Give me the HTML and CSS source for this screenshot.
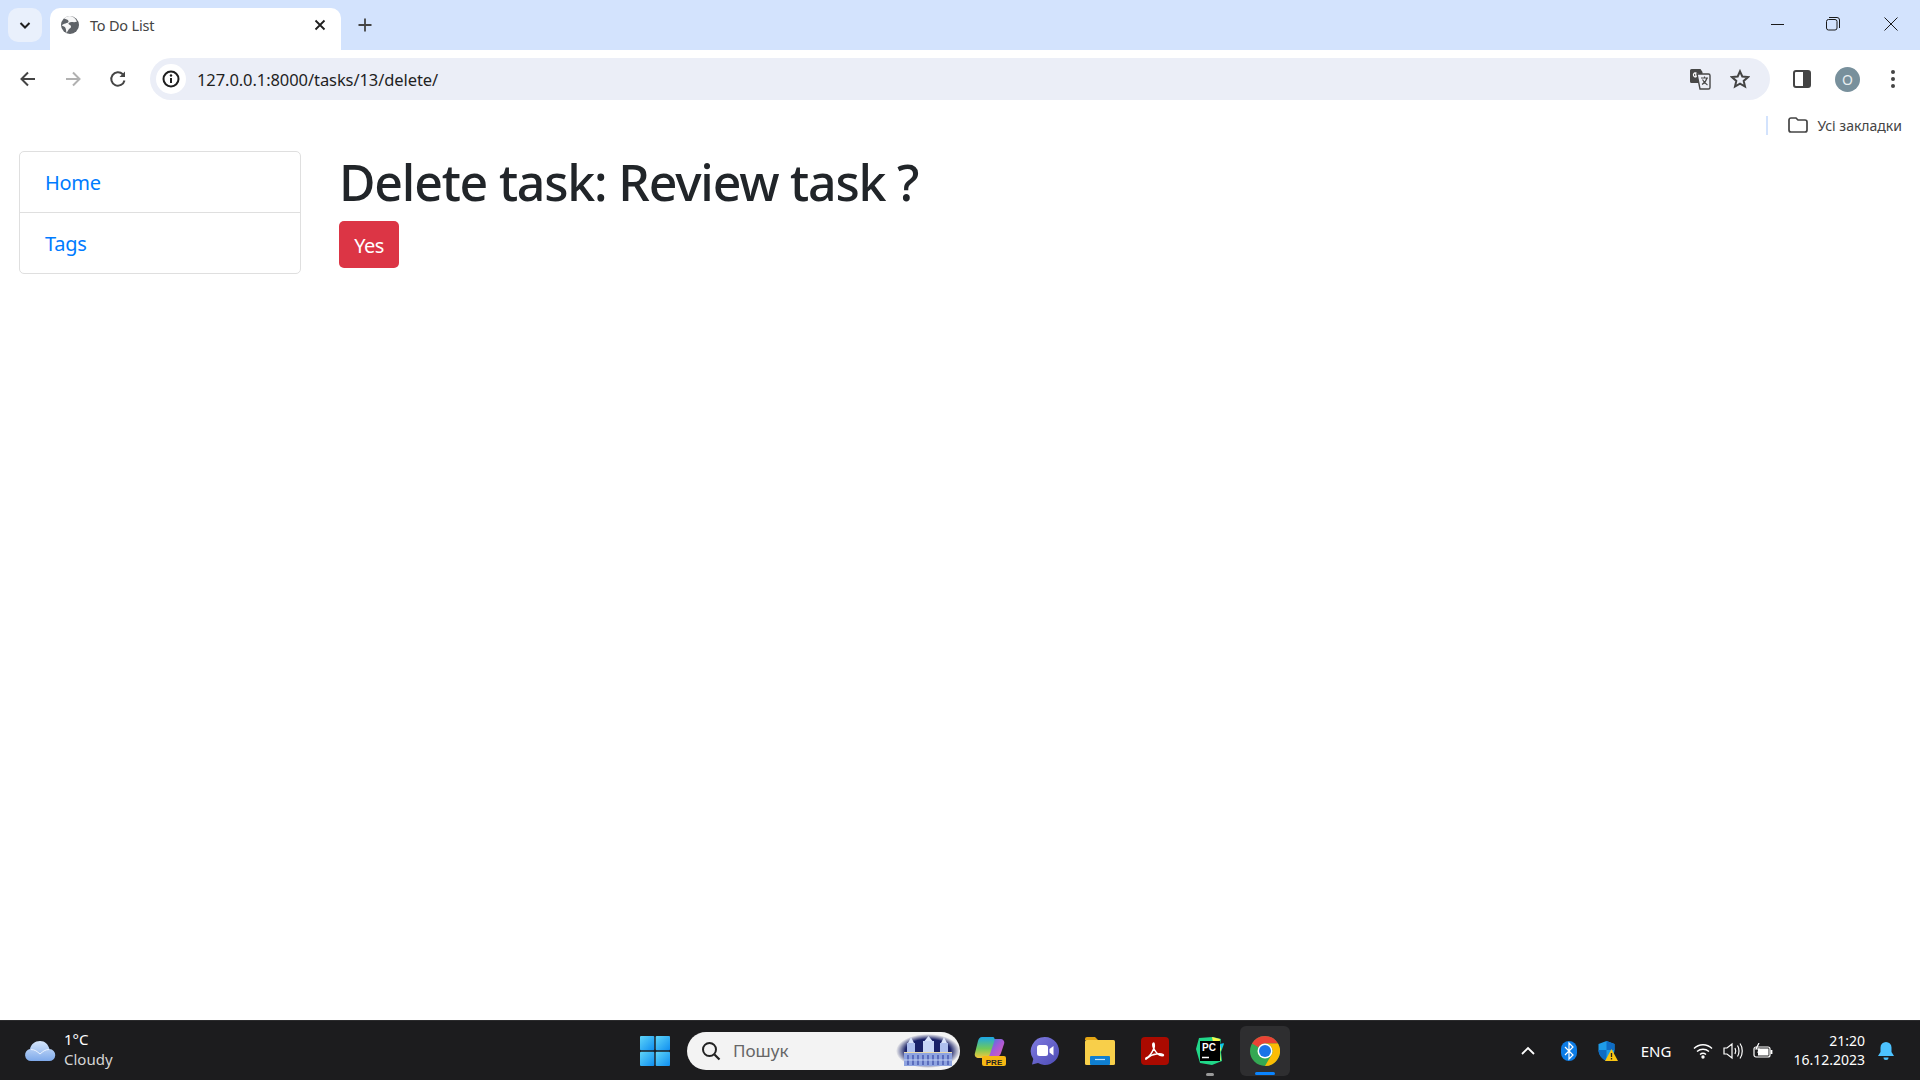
FILE: index.html

```html
<!DOCTYPE html>
<html lang="en">
<head>
    <meta charset="UTF-8">
    <title>To Do List</title>
    <link rel="stylesheet" href="styles.css">
</head>
<body>

<div class="tabstrip">
    <div class="tab-search">
        <svg width="14" height="14" viewBox="0 0 14 14"><path d="M2.5 5l4.5 4.5L11.500 5" fill="none" stroke="#1f1f1f" stroke-width="2"/></svg>
    </div>
    <div class="tab">
        <svg class="favicon" width="18" height="18" viewBox="0 0 18 18">
            <circle cx="9" cy="9" r="9" fill="#5f6368"/>
            <path d="M3 2.500c2 .5 4 1 4.500 2.500S6 7 4.500 7.500 1.500 8 .8 9.500c1.500.5 3 1 3.700 2.500s.5 3 1 5L8 13c1-1 2-1 2-2.500S8 8.500 7.500 8s1-2 3-2 3 .5 5.500-.5C14 1.500 12 .5 9 0 6.500 0 4.500 1 3 2.500z" fill="#fff" opacity=".95"/>
        </svg>
        <span class="tab-title">To Do List</span>
        <svg class="tab-close" width="12" height="12" viewBox="0 0 12 12"><path d="M1.500 1.500l9 9M10.500 1.500l-9 9" stroke="#1f1f1f" stroke-width="1.800"/></svg>
    </div>
    <svg class="new-tab" width="14" height="14" viewBox="0 0 14 14"><path d="M7 .5v13M.5 7h13" stroke="#444" stroke-width="1.800"/></svg>
    <div class="win-controls">
        <svg class="win-min" width="14" height="14" viewBox="0 0 14 14"><path d="M0 7.500h13" stroke="#1a1a1a" stroke-width="1"/></svg>
        <svg class="win-max" width="14" height="14" viewBox="0 0 14 14" fill="none" stroke="#1a1a1a"><rect x=".5" y="2.500" width="10.500" height="10.500" rx="2"/><path d="M3 .5h8a2.500 2.500 0 0 1 2.500 2.500v8"/></svg>
        <svg width="14" height="14" viewBox="0 0 14 14"><path d="M.5.5l13 13M13.500.5l-13 13" stroke="#1a1a1a" stroke-width="1"/></svg>
    </div>
</div>

<div class="toolbar">
    <svg class="nav-icon" width="18" height="18" viewBox="0 0 18 18"><path d="M16 9H3M9 2.500L2.500 9 9 15.500" fill="none" stroke="#444" stroke-width="2"/></svg>
    <svg class="nav-icon" width="18" height="18" viewBox="0 0 18 18"><path d="M2 9h13M9 2.500L15.500 9 9 15.500" fill="none" stroke="#b1b1b1" stroke-width="2"/></svg>
    <svg class="nav-icon" width="18" height="18" viewBox="0 0 18 18"><path d="M15.500 10.500A6.700 6.700 0 1 1 13.800 4.300" fill="none" stroke="#444" stroke-width="2"/><path d="M16 1.500V7h-5.500z" fill="#444"/></svg>
    <div class="omnibox">
        <div class="site-info">
            <svg width="18" height="18" viewBox="0 0 18 18"><circle cx="9" cy="9" r="7.500" fill="none" stroke="#1f1f1f" stroke-width="2"/><path d="M9 8v5" stroke="#1f1f1f" stroke-width="2"/><circle cx="9" cy="5.500" r="1.200" fill="#1f1f1f"/></svg>
        </div>
        <span class="url">127.0.0.1:8000/tasks/13/delete/</span>
        <svg class="translate" width="22" height="22" viewBox="0 0 22 22">
            <path d="M2.500 1h9l2 3v11h-11A1.500 1.500 0 0 1 1 13.500v-11A1.500 1.500 0 0 1 2.500 1z" fill="#474747"/>
            <path d="M9.500 6.200H6.800v1.400h1.500a2 2 0 1 1-.6-2.200" fill="none" stroke="#fff" stroke-width="1.200"/>
            <path d="M8 6h11.500A1.500 1.500 0 0 1 21 7.500v12a1.500 1.500 0 0 1-1.500 1.500H11z" fill="#eceef6" stroke="#474747" stroke-width="1.400"/>
            <path d="M12 10h7M15.500 8.500V10M18 10c-.8 3-2.500 5-5 6.500M13.500 11.500c1 2 2.500 4 5 5.500" fill="none" stroke="#474747" stroke-width="1.100"/>
        </svg>
        <svg class="star" width="20" height="20" viewBox="0 0 20 20"><path d="M10 2.300l2.300 5.200 5.700.6-4.300 3.800 1.300 5.600-5-2.900-5 2.900 1.300-5.600L2 8.100l5.700-.6z" fill="none" stroke="#444" stroke-width="2"/></svg>
    </div>
    <svg class="side-panel" width="18" height="18" viewBox="0 0 18 18"><rect x="1" y="1" width="16" height="16" rx="2" fill="#fff" stroke="#444" stroke-width="2"/><path d="M10 1h5a2 2 0 0 1 2 2v12a2 2 0 0 1-2 2h-5z" fill="#444"/></svg>
    <div class="avatar">O</div>
    <svg class="menu-dots" width="6" height="20" viewBox="0 0 6 20"><circle cx="3" cy="3" r="2" fill="#444"/><circle cx="3" cy="10" r="2" fill="#444"/><circle cx="3" cy="17" r="2" fill="#444"/></svg>
</div>

<div class="bookmarks">
    <span class="bm-sep"></span>
    <svg width="20" height="16" viewBox="0 0 20 16"><path d="M1 3a2 2 0 0 1 2-2h5l2 2h7a2 2 0 0 1 2 2v8a2 2 0 0 1-2 2H3a2 2 0 0 1-2-2z" fill="none" stroke="#444" stroke-width="1.700"/></svg>
    <span class="bm-label">Усі закладки</span>
</div>

<div class="page">
    <ul class="list-group">
        <li class="list-item"><a href="#">Home</a></li>
        <li class="list-item"><a href="#">Tags</a></li>
    </ul>
    <div class="content">
        <h1>Delete task: Review task ?</h1>
        <button class="btn-danger">Yes</button>
    </div>
</div>

<div class="taskbar">
    <div class="tb-left">
        <svg width="32" height="22" viewBox="0 0 32 22">
            <defs><linearGradient id="cloud" x1="0" y1="0" x2="0" y2="1"><stop offset="0" stop-color="#d6e6fb"/><stop offset="1" stop-color="#7ea9ea"/></linearGradient></defs>
            <path d="M7 21a6 6 0 0 1-1-11.900C7 4 11 1 16 1s8 3 9.500 8A6 6 0 0 1 25 21z" fill="url(#cloud)"/>
            <path d="M7 9.500c4 0 6 2 9 4.500 3-2.500 5-4.500 9-4.500" fill="none" stroke="#eaf2ff" stroke-width="1"/>
        </svg>
        <div class="weather">
            <div class="temp">1°C</div>
            <div class="cond">Cloudy</div>
        </div>
    </div>
    <div class="tb-center">
        <svg class="start" width="30" height="30" viewBox="0 0 30 30">
            <defs><linearGradient id="win" x1="0" y1="0" x2="1" y2="1"><stop offset="0" stop-color="#5fd5f8"/><stop offset="1" stop-color="#0f8ef0"/></linearGradient></defs>
            <rect x="0" y="0" width="14.300" height="14.300" rx="1" fill="url(#win)"/><rect x="15.700" y="0" width="14.300" height="14.300" rx="1" fill="url(#win)"/>
            <rect x="0" y="15.700" width="14.300" height="14.300" rx="1" fill="url(#win)"/><rect x="15.700" y="15.700" width="14.300" height="14.300" rx="1" fill="url(#win)"/>
        </svg>
        <div class="search">
            <svg width="20" height="20" viewBox="0 0 20 20"><circle cx="8.500" cy="8.500" r="6.500" fill="none" stroke="#222" stroke-width="2"/><path d="M13.500 13.500l5 5" stroke="#222" stroke-width="2.200"/></svg>
            <span class="search-text">Пошук</span>
            <svg class="search-art" width="64" height="34" viewBox="0 0 64 34">
                <defs><radialGradient id="night"><stop offset=".7" stop-color="#1a2268"/><stop offset="1" stop-color="#1a2268" stop-opacity="0"/></radialGradient></defs>
                <ellipse cx="32" cy="17" rx="32" ry="17" fill="url(#night)"/>
                <rect x="8" y="18" width="48" height="14" fill="#8ea3e0"/>
                <rect x="11" y="9" width="8" height="9" fill="#aebfee"/><rect x="27" y="7" width="11" height="11" fill="#c8d6f6"/><rect x="44" y="9" width="8" height="9" fill="#aebfee"/>
                <path d="M15 3l3 6h-6zM32.500 2l4 5h-8zM48 3l3 6h-6z" fill="#dbe5fb"/>
                <path d="M8 18.500h48" stroke="#e8d9b0" stroke-width="1.200"/>
                <path d="M12 21v10M17 21v10M22 21v10M27 21v10M32 21v10M37 21v10M42 21v10M47 21v10M52 21v10" stroke="#3a4aa6" stroke-width="1.200"/>
                <path d="M8 26h48" stroke="#c4d2f4" stroke-width="1"/>
            </svg>
        </div>
        <div class="app">
            <svg width="32" height="32" viewBox="0 0 32 32">
                <defs>
                    <linearGradient id="cop-a" x1="0" y1="0" x2="0" y2="1"><stop offset="0" stop-color="#1ba7e8"/><stop offset=".55" stop-color="#6fc95a"/><stop offset="1" stop-color="#f6c73b"/></linearGradient>
                    <linearGradient id="cop-b" x1="0" y1="0" x2="1" y2="1"><stop offset="0" stop-color="#2c7fe0"/><stop offset=".5" stop-color="#a65ad8"/><stop offset="1" stop-color="#e45fb0"/></linearGradient>
                </defs>
                <path d="M20 4h6c3 0 5 2 4 5l-3 9c-1 3-3 4-6 4h-7z" fill="url(#cop-b)"/>
                <path d="M8 2h10c3 0 3 2 2 5l-4 12c-1 3-3 4-6 4H5c-3 0-5-2-4-5L4 6c1-3 2-4 4-4z" fill="url(#cop-a)"/>
                <rect x="8" y="21" width="24" height="10" rx="2" fill="#f7b813"/>
                <text x="20" y="29.500" class="pre-label">PRE</text>
            </svg>
        </div>
        <div class="app">
            <svg width="30" height="30" viewBox="0 0 30 30">
                <defs><linearGradient id="meet" x1="0" y1="0" x2="1" y2="1"><stop offset="0" stop-color="#7f7be0"/><stop offset="1" stop-color="#4d4bb5"/></linearGradient></defs>
                <path d="M15 1a14 14 0 1 1-7 26.100L2 28.500 3.300 23A14 14 0 0 1 15 1z" fill="url(#meet)"/>
                <rect x="7" y="9" width="11" height="11" rx="2.500" fill="#fff"/><path d="M19.500 13l4-3v9.500l-4-3z" fill="#fff"/>
            </svg>
        </div>
        <div class="app">
            <svg width="30" height="28" viewBox="0 0 30 28">
                <path d="M0 2a2 2 0 0 1 2-2h8l3 3h-13z" fill="#e3a514"/>
                <rect x="0" y="3" width="30" height="25" rx="1.500" fill="#f8cf4a"/>
                <rect x="5" y="19" width="20" height="9" rx="1" fill="#0f7fd1"/>
                <path d="M10 22.500h10" stroke="#bfe2fb" stroke-width="1.200"/>
            </svg>
        </div>
        <div class="app">
            <svg width="28" height="28" viewBox="0 0 28 28">
                <rect width="28" height="28" rx="4" fill="#aa0a00"/>
                <path d="M5 21c3-1 6-5 8-10 .5-2 .5-5-.5-5s-1 3 0 5c2 4 4 6 6 7s4 1 4 0-3-1.500-7-1-7 2-9 4-2 1-1.500 0z" fill="none" stroke="#fff" stroke-width="1.500"/>
            </svg>
        </div>
        <div class="app app-running">
            <svg width="30" height="32" viewBox="0 0 30 32">
                <path d="M4 3l14-1 8 2-1 6 4-1-3 8 1 9-10 4-12-2-4-14z" fill="#21d789"/>
                <path d="M17 2l8 2-1 6 4-1-3 8 1 9-6-8z" fill="#fcf84a"/>
                <path d="M25 9l4-1-3 7z" fill="#07c3f2"/>
                <rect x="5" y="6" width="20" height="20" fill="#000"/>
                <text x="7" y="16" class="pc-label">PC</text>
                <path d="M7 22.500h7" stroke="#fff" stroke-width="1.500"/>
            </svg>
            <span class="run-dot"></span>
        </div>
        <div class="app app-active">
            <svg width="30" height="30" viewBox="0 0 30 30">
                <circle cx="15" cy="15" r="15" fill="#34a853"/>
                <path d="M15 0a15 15 0 0 1 13 7.500H15a7.500 7.500 0 0 0-6.500 3.750L2 7.500A15 15 0 0 1 15 0z" fill="#ea4335"/>
                <path d="M28 7.500A15 15 0 0 1 15 30l6.500-11.250A7.500 7.500 0 0 0 15 7.500z" fill="#fbbc04"/>
                <circle cx="15" cy="15" r="7.500" fill="#fff"/>
                <circle cx="15" cy="15" r="6" fill="#1a73e8"/>
            </svg>
            <span class="active-bar"></span>
        </div>
    </div>
    <div class="tb-right">
        <svg class="tray-chevron" width="14" height="9" viewBox="0 0 14 9"><path d="M1 8l6-6 6 6" fill="none" stroke="#fff" stroke-width="1.800"/></svg>
        <svg class="tray-bt" width="16" height="20" viewBox="0 0 16 20"><rect width="16" height="20" rx="8" fill="#0c7ce6"/><path d="M4 6l8 8-4 4V2l4 4-8 8" fill="none" stroke="#fff" stroke-width="1.200"/></svg>
        <svg class="tray-shield" width="20" height="20" viewBox="0 0 20 20">
            <path d="M8.500 0l8 3v6c0 5-4 9-8 11-4-2-8-6-8-11V3z" fill="#1e9be8"/><path d="M8.500 0l8 3v6H8.500zM.5 9h8v11C4.500 18 .5 14 .5 9z" fill="#0f6cc4"/>
            <path d="M13.500 8l6.500 12H7z" fill="#f9c513"/><path d="M13.500 12v4M13.500 17v1.500" stroke="#222" stroke-width="1.300"/>
        </svg>
        <span class="tray-lang">ENG</span>
        <svg width="20" height="16" viewBox="0 0 20 16" fill="none" stroke="#fff" stroke-width="1.400"><path d="M1 5.500c5-5 13-5 18 0M4 8.500c3.500-3 8.500-3 12 0M7 11.500c1.800-1.500 4.200-1.500 6 0"/><circle cx="10" cy="14" r="1" fill="#fff"/></svg>
        <svg width="20" height="18" viewBox="0 0 20 18" fill="none" stroke="#fff" stroke-width="1.200"><path d="M1 6h3l5-4v14l-5-4H1zM12 6c1 2 1 4 0 6M14.500 3.500c2 3 2 8 0 11M17 1.500c3 4 3 11 0 15"/></svg>
        <svg width="20" height="16" viewBox="0 0 20 16" fill="none" stroke="#fff" stroke-width="1.200"><rect x="1" y="4" width="16" height="10" rx="2"/><rect x="5" y="5.500" width="10.500" height="7" fill="#fff" stroke="none"/><path d="M18.500 7v4" stroke-width="1.800"/><path d="M6 0L3 6h3l-1 4"/></svg>
        <div class="clock">
            <div>21:20</div>
            <div>16.12.2023</div>
        </div>
        <svg class="bell" width="16" height="18" viewBox="0 0 16 18"><path d="M8 0a5.500 5.500 0 0 1 5.500 5.500V10l2.500 4H0l2.500-4V5.500A5.500 5.500 0 0 1 8 0z" fill="#4cc2ff"/><path d="M5.500 15.500h5a2.500 2.500 0 0 1-5 0z" fill="#4cc2ff"/></svg>
    </div>
</div>

</body>
</html>
```

FILE: styles.css

```css
html, body { margin: 0; padding: 0; height: 100%; }
body { display: flex; flex-direction: column; height: 1080px; overflow: hidden; background: #fff; font-family: "Noto Sans", "Open Sans", sans-serif; }
svg { display: block; flex: none; }

/* browser top */
.tabstrip { display: flex; align-items: flex-end; height: 50px; background: #d3e3fd; flex: none; }
.tab-search { width: 34px; height: 34px; margin: 0 8px 8px 8px; border-radius: 10px; background: #e9f0fc; display: flex; align-items: center; justify-content: center; }
.tab { display: flex; align-items: center; width: 291px; height: 42px; box-sizing: border-box; padding: 0 15px 8px 11px; background: #fff; border-radius: 10px 10px 0 0; }
.tab-title { margin-left: 11px; flex: 1; font-size: 14.500px; letter-spacing: -.2px; color: #444; }
.new-tab { margin: 0 0 18px 17px; }
.win-controls { margin: 0 0 19px auto; padding-right: 22px; display: flex; }
.win-max { margin-left: 41px; margin-right: 44px; }

.toolbar { display: flex; align-items: center; height: 58px; flex: none; padding: 0 0 0 19px; background: #fff; border-radius: 10px 10px 0 0; }
.nav-icon { margin-right: 27px; }
.omnibox { display: flex; align-items: center; height: 42px; width: 1620px; margin-left: -4px; padding: 0 0 0 6px; box-sizing: border-box; background: #ebeef7; border-radius: 21px; }
.site-info { width: 30px; height: 30px; border-radius: 50%; background: #fff; display: flex; align-items: center; justify-content: center; }
.url { margin-left: 11px; flex: 1; font-size: 16.500px; letter-spacing: -.08px; color: #1f1f1f; }
.star { margin: 0 20px 0 19px; }
.side-panel { margin-left: 23px; }
.avatar { width: 25px; height: 25px; margin-left: 24px; border-radius: 50%; background: #78909c; color: #e8eef0; font-size: 14px; text-align: center; line-height: 25px; }
.menu-dots { margin-left: 30px; }

.bookmarks { display: flex; align-items: center; justify-content: flex-end; height: 34px; flex: none; padding-right: 18px; }
.bm-sep { width: 2px; height: 19px; background: #d3e3fd; margin-right: 20px; }
.bm-label { margin-left: 9px; font-size: 14px; color: #444; }

/* page */
.page { flex: 1; display: flex; align-items: flex-start; padding: 9px 0 0 19px; }
.list-group { list-style: none; margin: 0; padding: 0; width: 282px; box-sizing: border-box; border: 1px solid #dfdfdf; border-radius: 5px; }
.list-item { height: 60px; box-sizing: border-box; padding: 1px 25px 0; font-size: 20px; line-height: 60px; letter-spacing: -.3px; }
.list-item + .list-item { height: 61px; border-top: 1px solid #dfdfdf; }
.list-item a { color: #007bff; text-decoration: none; }
.content { margin-left: 38px; }
h1 { margin: 0 0 9px 0; padding-top: 1px; font-size: 50px; font-weight: 500; line-height: 60px; letter-spacing: -1.200px; color: #212529; }
.btn-danger { display: block; width: 60px; height: 47px; padding: 2px 0 0; border: none; border-radius: 5px; background: #dc3545; color: #fff; font: 20px "Noto Sans", "Open Sans", sans-serif; letter-spacing: -.5px; }

/* taskbar */
.taskbar { display: flex; align-items: center; height: 60px; flex: none; background: #1c1c1e; border-top: 1px solid #2b2b2d; box-sizing: border-box; color: #fff; }
.tb-left { display: flex; align-items: center; width: 640px; padding-left: 24px; box-sizing: border-box; }
.weather { margin: 0 0 3px 8px; font-size: 15px; line-height: 20px; }
.cond { color: #d5d5d5; }
.tb-center { display: flex; align-items: center; }
.start { margin-right: 17px; }
.search { display: flex; align-items: center; width: 273px; height: 38px; box-sizing: border-box; padding: 0 0 0 14px; background: #f3f3f3; border-radius: 19px; }
.search-text { margin-left: 12px; flex: 1; font-size: 17px; color: #666; }
.app { position: relative; width: 50px; height: 50px; margin-left: 5px; display: flex; align-items: center; justify-content: center; border-radius: 6px; }
.app-active { background: #2e2e30; }
.pre-label { font: bold 8px "Liberation Sans", sans-serif; fill: #222; text-anchor: middle; }
.pc-label { font: bold 10px "Liberation Sans", sans-serif; fill: #fff; }
.run-dot { position: absolute; bottom: 0; left: 21px; width: 8px; height: 3px; border-radius: 2px; background: #9a9a9a; }
.active-bar { position: absolute; bottom: 1px; left: 15px; width: 20px; height: 3px; border-radius: 2px; background: #0a84ff; }
.tb-right { display: flex; align-items: center; margin-left: auto; padding-right: 26px; gap: 10px; }
.tray-chevron { margin-right: 16px; }
.tray-bt { margin-right: 11px; }
.tray-shield { margin-right: 13px; }
.tray-lang { font-size: 15px; margin-right: 12px; }
.clock { margin: 0 0 2px 10px; font-size: 14px; line-height: 19px; text-align: right; }
.bell { margin-left: 3px; }
```
